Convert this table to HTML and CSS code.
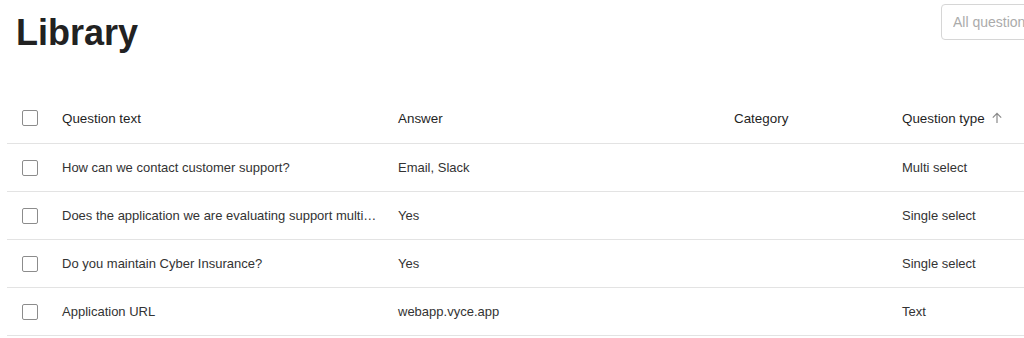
FILE: index.html
```html
<!DOCTYPE html>
<html>
<head>
<meta charset="utf-8">
<link rel="stylesheet" href="styles.css">
</head>
<body>
<div class="page">
  <header class="top">
    <h1 class="title">Library</h1>
    <input class="search" type="text" placeholder="All questions">
  </header>
  <div class="table">
    <div class="row head">
      <div class="cell check"><span class="box"></span></div>
      <div class="cell q">Question text</div>
      <div class="cell a">Answer</div>
      <div class="cell c">Category</div>
      <div class="cell t">Question type
        <svg class="sort" width="12" height="12" viewBox="0 0 12 12"><path d="M6 11V1.5M1.8 5.6L6 1.4l4.2 4.2" fill="none" stroke="#8a8a8a" stroke-width="1.2"/></svg>
      </div>
    </div>
    <div class="row">
      <div class="cell check"><span class="box"></span></div>
      <div class="cell q">How can we contact customer support?</div>
      <div class="cell a">Email, Slack</div>
      <div class="cell c"></div>
      <div class="cell t">Multi select</div>
    </div>
    <div class="row">
      <div class="cell check"><span class="box"></span></div>
      <div class="cell q">Does the application we are evaluating support multi-factor authentication?</div>
      <div class="cell a">Yes</div>
      <div class="cell c"></div>
      <div class="cell t">Single select</div>
    </div>
    <div class="row">
      <div class="cell check"><span class="box"></span></div>
      <div class="cell q">Do you maintain Cyber Insurance?</div>
      <div class="cell a">Yes</div>
      <div class="cell c"></div>
      <div class="cell t">Single select</div>
    </div>
    <div class="row">
      <div class="cell check"><span class="box"></span></div>
      <div class="cell q">Application URL</div>
      <div class="cell a">webapp.vyce.app</div>
      <div class="cell c"></div>
      <div class="cell t">Text</div>
    </div>
  </div>
</div>
</body>
</html>
```

FILE: styles.css
```css
html, body {
  margin: 0;
  padding: 0;
  background: #fff;
  overflow: hidden;
}
body {
  font-family: "Liberation Sans", Arial, Helvetica, sans-serif;
  color: #333;
}
.page {
  width: 1180px;
  padding-left: 7px;
}
.top {
  display: flex;
  align-items: flex-start;
  justify-content: space-between;
  padding-top: 4px;
  height: 48px;
}
.title {
  margin: 7px 0 0 9px;
  font-size: 36px;
  line-height: 44px;
  font-weight: 700;
  color: #222;
}
.search {
  box-sizing: border-box;
  width: 220px;
  height: 36px;
  margin-right: 26px;
  border: 1px solid #d6d6d6;
  border-radius: 4px;
  padding: 0 11px;
  font-family: inherit;
  font-size: 14px;
  color: #333;
  outline: none;
}
.search::placeholder {
  color: #ababab;
}
.table {
  margin-top: 42px;
}
.row {
  display: grid;
  grid-template-columns: 39px 336px 336px 168px 260px;
  height: 48px;
  border-bottom: 1px solid #e3e3e3;
  box-sizing: border-box;
  align-items: center;
  font-size: 13px;
}
.row.head {
  height: 50px;
  padding-bottom: 1px;
  font-size: 13.4px;
  color: #1f1f1f;
}
.cell {
  padding: 0 4px 0 16px;
  white-space: nowrap;
  overflow: hidden;
  text-overflow: ellipsis;
}
.cell.check {
  padding: 0 0 0 15px;
  display: flex;
  align-items: center;
}
.box {
  width: 16px;
  height: 16px;
  box-sizing: border-box;
  border: 1.5px solid #8c8c8c;
  border-radius: 2px;
  display: block;
}
.cell.t {
  display: flex;
  align-items: center;
  gap: 6px;
}
.sort {
  display: block;
}
```
